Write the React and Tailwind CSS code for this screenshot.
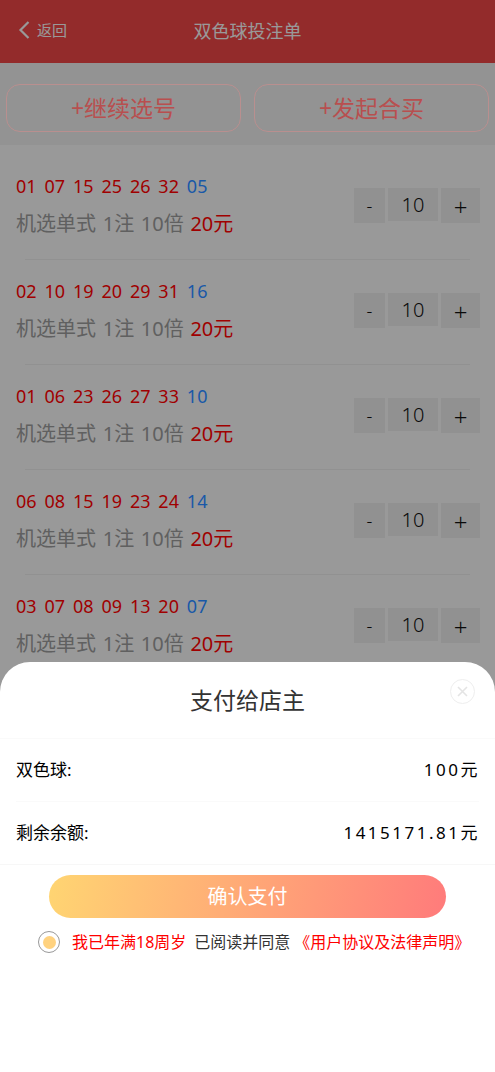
import React from "react";

const rows = [
  ["01 07 15 25 26 32", "05"],
  ["02 10 19 20 29 31", "16"],
  ["01 06 23 26 27 33", "10"],
  ["06 08 15 19 23 24", "14"],
  ["03 07 08 09 13 20", "07"],
];

const font = "font-['Noto_Sans','Noto_Sans_CJK_SC',sans-serif]";

function Row({ red, blue, last }) {
  return (
    <div className="relative flex h-[105px] items-start pl-[16px] pr-[15px]">
      <div className="flex-1 pt-[17px]">
        <div className="h-[28px] text-[18px] leading-[28px] whitespace-pre [word-spacing:3.2px]">
          <span className="relative z-[1] text-[#a00000]">{red} </span>
          <span className="relative z-[1] text-[#1858a8]">{blue}</span>
        </div>
        <div className="mt-[10px] h-[28px] text-[20px] leading-[28px] text-[#a0a0a0] whitespace-pre [word-spacing:1.5px]">
          机选单式 1注 10倍 <span className="relative z-[1] text-[#a00000]">20元</span>
        </div>
      </div>
      <div className="mt-[33px] flex items-start gap-[3px] text-[#111]">
        <div className="flex h-[35px] w-[31px] items-center justify-center bg-[#f2f2f2] text-[18px] font-light">-</div>
        <div className="flex h-[33px] w-[50px] items-center justify-center bg-[#f2f2f2] text-[20px] font-light">10</div>
        <div className="flex h-[35px] w-[39px] items-center justify-center bg-[#f2f2f2] pt-[3px] text-[24px] font-light">+</div>
      </div>
      {!last && <div className="absolute bottom-0 left-[25px] right-[25px] h-px bg-[#f2f2f2]" />}
    </div>
  );
}

export default function App() {
  return (
    <div className={`relative h-[1072px] w-full overflow-hidden bg-white ${font}`}>
      <header className="relative flex h-[63px] items-center justify-center bg-[#f54848] text-white">
        <div className="absolute left-[18px] top-[20px] flex items-center gap-[7px]">
          <svg width="12" height="20" viewBox="0 0 12 20" fill="none" stroke="white" strokeWidth="2.2">
            <path d="M10.5 2 L2.5 10 L10.5 18" />
          </svg>
          <span className="text-[15px] leading-[20px]">返回</span>
        </div>
        <h1 className="-mt-[2px] text-[18px] font-normal leading-[24px]">双色球投注单</h1>
      </header>
      <div className="flex h-[82px] gap-[13px] bg-[#f5f5f5] px-[6px] pt-[21px]">
        <button className="relative z-[1] h-[48px] flex-1 rounded-[14px] border border-[#b98f8f] text-[23px] text-[#b84f4f]">+继续选号</button>
        <button className="relative z-[1] h-[48px] flex-1 rounded-[14px] border border-[#b98f8f] text-[23px] text-[#b84f4f]">+发起合买</button>
      </div>
      <div className="pt-[10px]">
        {rows.map((r, i) => (
          <Row key={i} red={r[0]} blue={r[1]} last={i === rows.length - 1} />
        ))}
      </div>

      <div className="absolute inset-0 bg-black/40" />

      <div className="absolute bottom-0 left-0 right-0 z-[2] h-[410px] rounded-t-[30px] bg-white">
        <div className="relative h-[77px] border-b border-[#fafafa] pt-[20px] text-center text-[23px] leading-[36px] text-[#333]">
          支付给店主
          <div className="absolute right-[20px] top-[17px] flex h-[25px] w-[25px] items-center justify-center rounded-full border border-[#eeeeee]">
            <svg width="11" height="11" viewBox="0 0 11 11" stroke="#e4e4e4" strokeWidth="1.6">
              <path d="M1 1 L10 10 M10 1 L1 10" />
            </svg>
          </div>
        </div>
        <div className="mx-[16px] flex h-[63px] items-center justify-between border-b border-[#fafafa] text-[17px] text-black">
          <span>双色球:</span>
          <span className="-mr-px tracking-[2.5px]">100元</span>
        </div>
        <div className="flex h-[63px] items-center justify-between border-b border-[#f7f7f7] px-[16px] text-[17px] text-black">
          <span>剩余余额:</span>
          <span className="-mr-px tracking-[2.5px]">1415171.81元</span>
        </div>
        <div className="mt-[10px] flex justify-center">
          <button className="h-[43px] w-[397px] rounded-full bg-[linear-gradient(100deg,#ffd572,#ff7b7b)] text-[20px] text-white">确认支付</button>
        </div>
        <div className="mt-[12px] flex items-center pl-[38px] text-[16px] leading-[24px] whitespace-pre">
          <div className="flex h-[22px] w-[22px] items-center justify-center rounded-full border border-[#999]">
            <div className="h-[13px] w-[13px] rounded-full bg-[#ffd27f]" />
          </div>
          <span className="ml-[12px] text-[#ff0000]">我已年满18周岁</span>
          <span className="ml-[8px] text-[#333]">已阅读并同意</span>
          <span className="ml-[4px] text-[#ff0000]">《用户协议及法律声明》</span>
        </div>
      </div>
    </div>
  );
}
